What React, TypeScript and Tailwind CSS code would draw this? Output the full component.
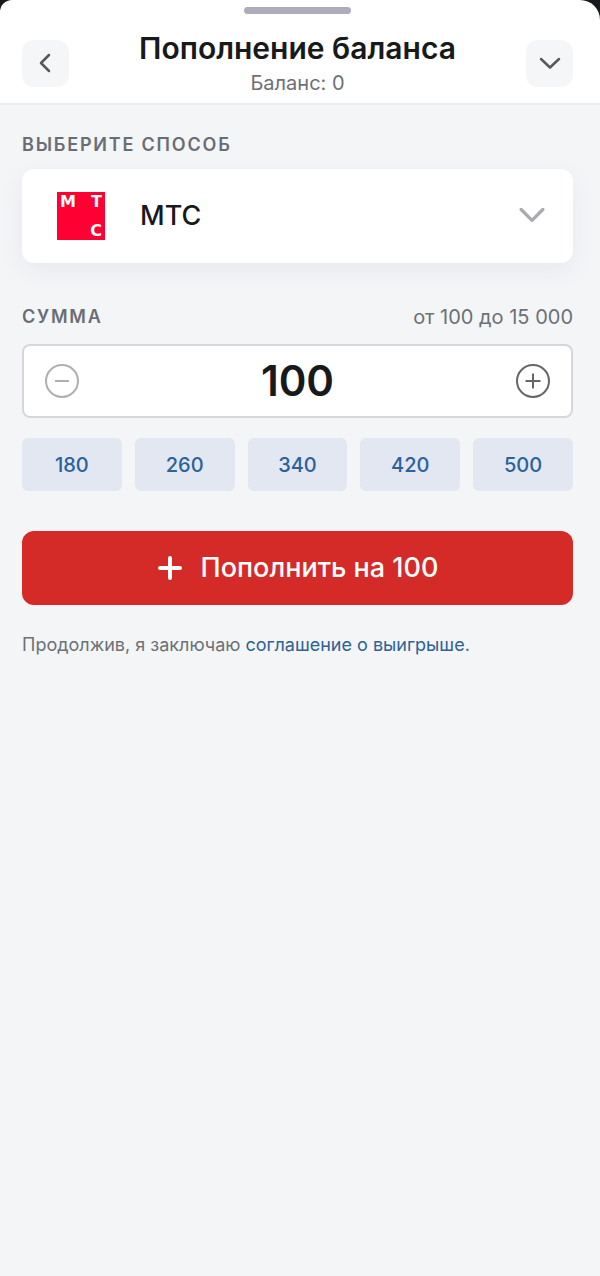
import React, { useState } from 'react';
import { clsx } from 'clsx';

const MIN_AMOUNT = 100;
const MAX_AMOUNT = 15000;
const STEP = 10;
const PRESETS = [180, 260, 340, 420, 500];

const MtsLogo: React.FC = () => (
  <span
    aria-hidden="true"
    className="grid size-12 shrink-0 grid-cols-2 content-between bg-[#ff0032] px-[3px] py-[3px] font-['DejaVu_Sans',sans-serif] text-[16px] leading-[13px] font-bold text-white"
  >
    <span>М</span>
    <span className="text-right">Т</span>
    <span className="col-start-2 text-right">С</span>
  </span>
);

const Chevron: React.FC<{ d: string; className: string; strokeWidth?: number }> = ({
  d,
  className,
  strokeWidth = 2,
}) => (
  <svg
    viewBox="0 0 24 24"
    fill="none"
    stroke="currentColor"
    strokeWidth={strokeWidth}
    strokeLinecap="round"
    strokeLinejoin="round"
    aria-hidden="true"
    className={className}
  >
    <path d={d} />
  </svg>
);

const Header: React.FC = () => (
  <header className="rounded-tl-xl rounded-tr-[20px] border-b-2 border-[#ececef] bg-white pt-[7px] pr-[27px] pb-[7px] pl-[22px]">
    <div className="mx-auto h-[7px] w-[107px] rounded-full bg-[#adacbb]" />
    <div className="mt-4 flex items-center justify-between">
      <button
        type="button"
        aria-label="Назад"
        className="flex size-[47px] items-center justify-center rounded-xl bg-[#f4f6f8] text-[#56585c]"
      >
        <Chevron d="M15 4 7 12l8 8" className="size-6" strokeWidth={2.500} />
      </button>
      <div className="text-center">
        <h1 className="text-[30px] leading-9 font-semibold text-[#18191b]">Пополнение баланса</h1>
        <p className="mt-1 text-[20px] leading-[26px] text-[#6d7076]">Баланс: 0</p>
      </div>
      <button
        type="button"
        aria-label="Свернуть"
        className="flex size-[47px] items-center justify-center rounded-xl bg-[#f4f6f8] text-[#56585c]"
      >
        <Chevron d="m3 8 9 8.500L21 8" className="size-6" strokeWidth={2.500} />
      </button>
    </div>
  </header>
);

const App: React.FC = () => {
  const [amount, setAmount] = useState(MIN_AMOUNT);

  const changeAmount = (value: number) => {
    setAmount(Math.min(MAX_AMOUNT, Math.max(0, value || 0)));
  };

  const isMin = amount <= MIN_AMOUNT;

  return (
    <div className="flex min-h-screen flex-col bg-[#17181b] font-[Inter,sans-serif]">
      <Header />
      <main className="flex-1 bg-[#f3f5f7] pt-7 pr-[27px] pb-10 pl-[22px]">
        <label htmlFor="method" className="block text-[18px] leading-6 font-semibold tracking-widest text-[#6a6d74] uppercase">
          Выберите способ
        </label>
        <div className="relative mt-3 flex h-[94px] items-center rounded-xl bg-white pl-[35px] shadow-[0_8px_24px_rgba(50,50,100,0.06)]">
          <MtsLogo />
          <select
            id="method"
            className="h-full min-w-0 flex-1 appearance-none rounded-xl bg-transparent pl-[35px] text-[27px] font-medium text-[#18191b]"
          >
            <option>МТС</option>
          </select>
          <Chevron
            d="m2 6 10 10L22 6"
            className="pointer-events-none absolute right-7 size-[26px] text-[#a9abb0]"
            strokeWidth={3}
          />
        </div>

        <div className="mt-[42px] flex items-center justify-between leading-6">
          <label htmlFor="amount" className="text-[18px] font-semibold tracking-widest text-[#6a6d74] uppercase">
            Сумма
          </label>
          <span className="text-[20px] text-[#6d7076]">от 100 до 15 000</span>
        </div>
        <div className="mt-[15px] flex h-[74px] items-center rounded-lg border-2 border-[#d5d7db] bg-white px-5">
          <button
            type="button"
            aria-label="Уменьшить"
            onClick={() => changeAmount(amount - STEP)}
            disabled={isMin}
            className={clsx('shrink-0', isMin ? 'text-[#afafb3]' : 'text-[#65666b]')}
          >
            <svg viewBox="0 0 36 36" fill="none" stroke="currentColor" strokeWidth="2" className="size-9">
              <circle cx="18" cy="18" r="16" />
              <path d="M11 18h14" />
            </svg>
          </button>
          <input
            id="amount"
            inputMode="numeric"
            value={amount}
            onChange={(e) => changeAmount(Number(e.target.value))}
            className="min-w-0 flex-1 bg-transparent text-center text-[42px] leading-[52px] font-semibold text-[#18191b] outline-none"
          />
          <button
            type="button"
            aria-label="Увеличить"
            onClick={() => changeAmount(amount + STEP)}
            className="shrink-0 text-[#65666b]"
          >
            <svg viewBox="0 0 36 36" fill="none" stroke="currentColor" strokeWidth="2" className="size-9">
              <circle cx="18" cy="18" r="16" />
              <path d="M10.500 18h15M18 10.500v15" />
            </svg>
          </button>
        </div>

        <div className="mt-5 grid grid-cols-5 gap-[13px]">
          {PRESETS.map((preset) => (
            <button
              key={preset}
              type="button"
              onClick={() => changeAmount(preset)}
              className="h-[53px] rounded-md bg-[#e2e7f2] text-[20px] font-medium text-[#2a629b]"
            >
              {preset}
            </button>
          ))}
        </div>

        <button
          type="button"
          className="mt-10 flex h-[74px] w-full items-center justify-center gap-[18px] rounded-xl bg-[#d52b28] text-[27px] font-medium text-white"
        >
          <svg
            viewBox="0 0 26 26"
            fill="none"
            stroke="currentColor"
            strokeWidth="4"
            strokeLinecap="round"
            aria-hidden="true"
            className="size-[26px]"
          >
            <path d="M13 3v20M3 13h20" />
          </svg>
          Пополнить на {amount}
        </button>

        <p className="mt-7 text-[18px] leading-6 text-[#6d7076]">
          Продолжив, я заключаю{' '}
          <a href="#agreement" className="text-[#2f6294]">
            соглашение о выигрыше.
          </a>
        </p>
      </main>
    </div>
  );
};

export default App;
